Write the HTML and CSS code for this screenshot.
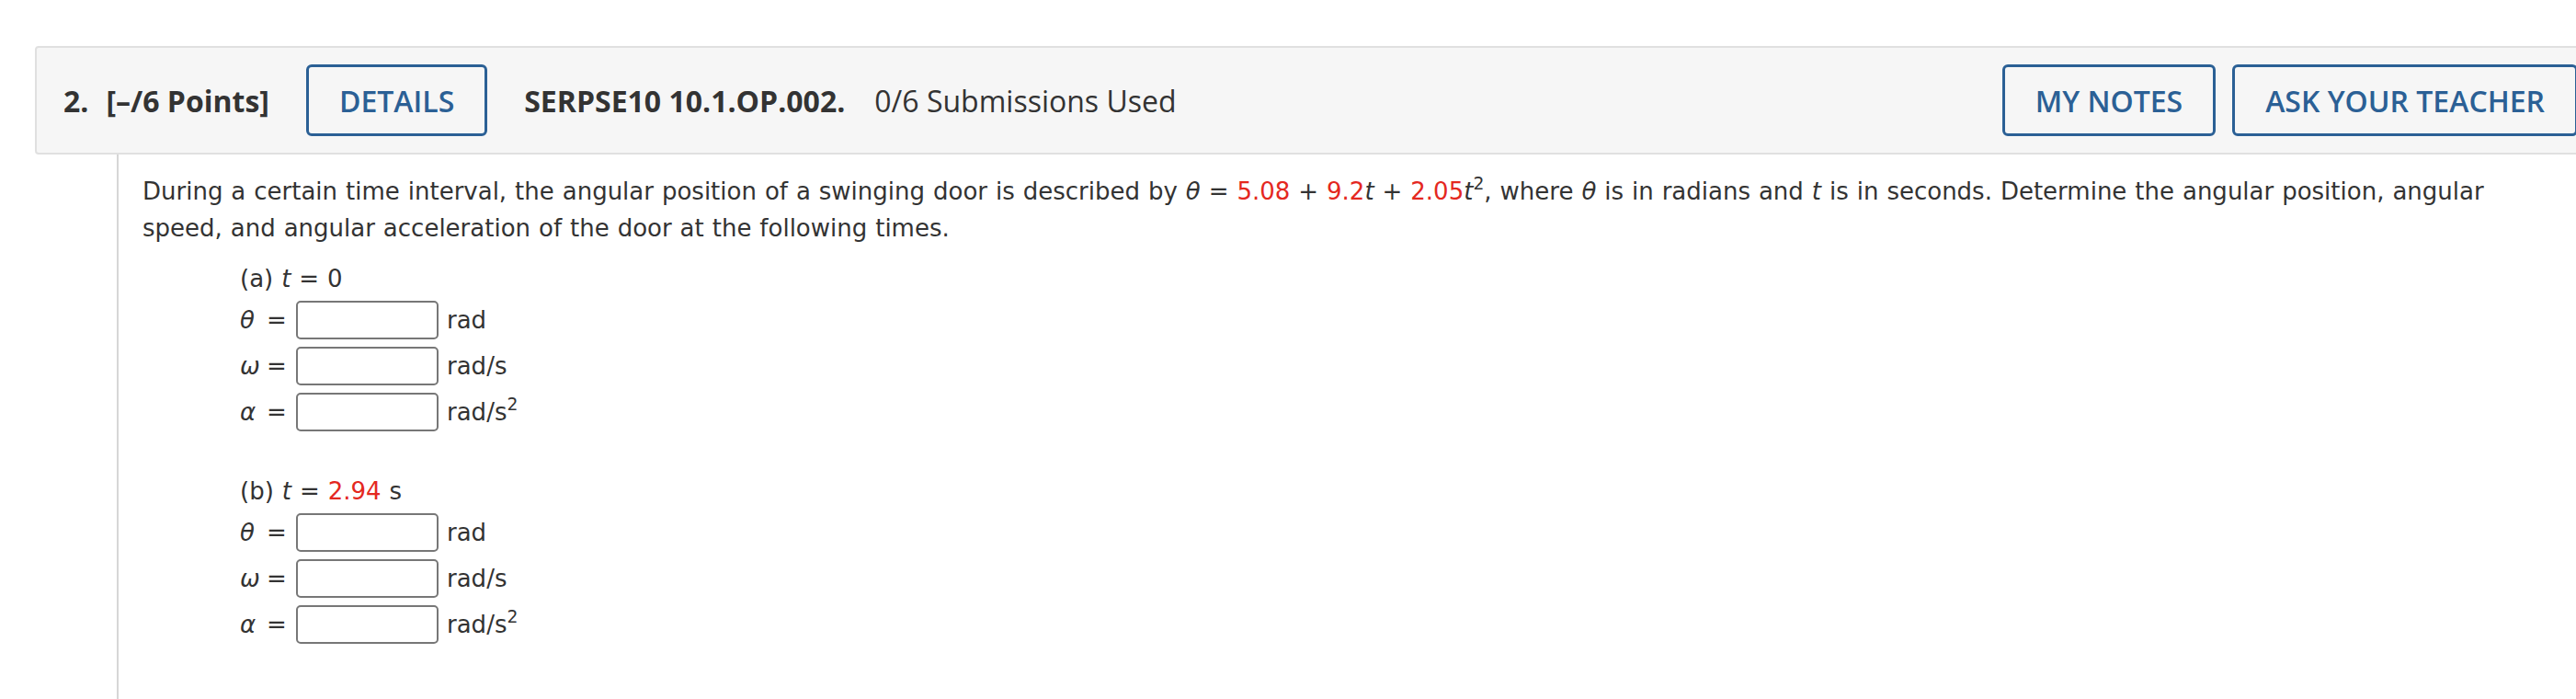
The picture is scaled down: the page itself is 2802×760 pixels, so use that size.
FILE: index.html
```html
<!DOCTYPE html>
<html lang="en">
<head>
<meta charset="utf-8">
<title>Question 2</title>
<link rel="stylesheet" href="styles.css">
</head>
<body>
<div class="question">
  <div class="qhead">
    <span class="qnum">2.</span>
    <span class="qpts">[–/6 Points]</span>
    <button class="btn btn-details">DETAILS</button>
    <span class="qid">SERPSE10 10.1.OP.002.</span>
    <span class="qsub">0/6 Submissions Used</span>
    <div class="head-actions">
      <button class="btn">MY NOTES</button>
      <button class="btn">ASK YOUR TEACHER</button>
    </div>
  </div>
  <div class="qbody">
    <p class="prompt">During a certain time interval, the angular position of a swinging door is described by <i>θ</i> = <span class="red">5.08</span> + <span class="red">9.2</span><i>t</i> + <span class="red">2.05</span><i>t</i><sup>2</sup>, where <i>θ</i> is in radians and <i>t</i> is in seconds. Determine the angular position, angular speed, and angular acceleration of the door at the following times.</p>

    <div class="part">
      <div class="part-label">(a) <i>t</i> = 0</div>
      <div class="row"><span class="sym"><i>θ</i></span><span class="eq">=</span><input class="ans" type="text"><span class="unit">rad</span></div>
      <div class="row"><span class="sym"><i>ω</i></span><span class="eq">=</span><input class="ans" type="text"><span class="unit">rad/s</span></div>
      <div class="row"><span class="sym"><i>α</i></span><span class="eq">=</span><input class="ans" type="text"><span class="unit">rad/s<sup>2</sup></span></div>
    </div>

    <div class="part">
      <div class="part-label">(b) <i>t</i> = <span class="red">2.94</span> s</div>
      <div class="row"><span class="sym"><i>θ</i></span><span class="eq">=</span><input class="ans" type="text"><span class="unit">rad</span></div>
      <div class="row"><span class="sym"><i>ω</i></span><span class="eq">=</span><input class="ans" type="text"><span class="unit">rad/s</span></div>
      <div class="row"><span class="sym"><i>α</i></span><span class="eq">=</span><input class="ans" type="text"><span class="unit">rad/s<sup>2</sup></span></div>
    </div>
  </div>
</div>
</body>
</html>
```

FILE: styles.css
```css
html, body {
  margin: 0;
  padding: 0;
  background: #ffffff;
  overflow: hidden;
}

body {
  font-family: "DejaVu Sans", Verdana, sans-serif;
  color: #333333;
}

.question {
  margin: 50px 0 0 38px;
  width: 2800px;
}

.qhead {
  display: flex;
  align-items: center;
  height: 114px;
  padding: 0 32px 0 29px;
  background: #f6f6f6;
  border: 2px solid #e0e0e0;
  border-radius: 4px;
  font-family: "Open Sans", "Liberation Sans", sans-serif;
  font-size: 32px;
  color: #333333;
}

.qnum {
  font-weight: 700;
}

.qpts {
  font-weight: 700;
  margin-left: 19px;
}

.qid {
  font-weight: 700;
  margin-left: 40px;
}

.qsub {
  font-weight: 400;
  margin-left: 32px;
}

.btn {
  font-family: "Open Sans", "Liberation Sans", sans-serif;
  font-size: 32px;
  font-weight: 600;
  color: #2b6095;
  background: transparent;
  border: 3px solid #2b6095;
  border-radius: 6px;
  height: 78px;
  padding: 0 33px;
  cursor: pointer;
}

.btn-details {
  margin-left: 40px;
}

.head-actions {
  margin-left: auto;
  display: flex;
  gap: 18px;
}

.qbody {
  margin-left: 89px;
  border-left: 2px solid #d6d6d6;
  padding: 20px 0 0 26px;
  min-height: 600px;
  font-size: 26px;
  line-height: 39px;
  word-spacing: 0.7px;
}

.prompt {
  width: 2590px;
  margin: 0 0 16px 0;
  line-height: 40px;
}

.red {
  color: #e4281f;
}

sup {
  font-size: 0.72em;
  line-height: 0;
  vertical-align: 0.6em;
}

.part {
  margin-left: 106px;
  margin-bottom: 42px;
}

.part-label {
  line-height: 39px;
}

.row {
  display: flex;
  align-items: center;
  height: 50px;
}

.sym {
  width: 29px;
}

.eq {
  width: 32px;
}

.ans {
  box-sizing: border-box;
  width: 155px;
  height: 42px;
  margin: 0;
  border: 2px solid #777777;
  border-radius: 5px;
  background: #ffffff;
  padding: 0 6px;
  font-family: "DejaVu Sans", sans-serif;
  font-size: 22px;
}

.unit {
  margin-left: 9px;
}
```
